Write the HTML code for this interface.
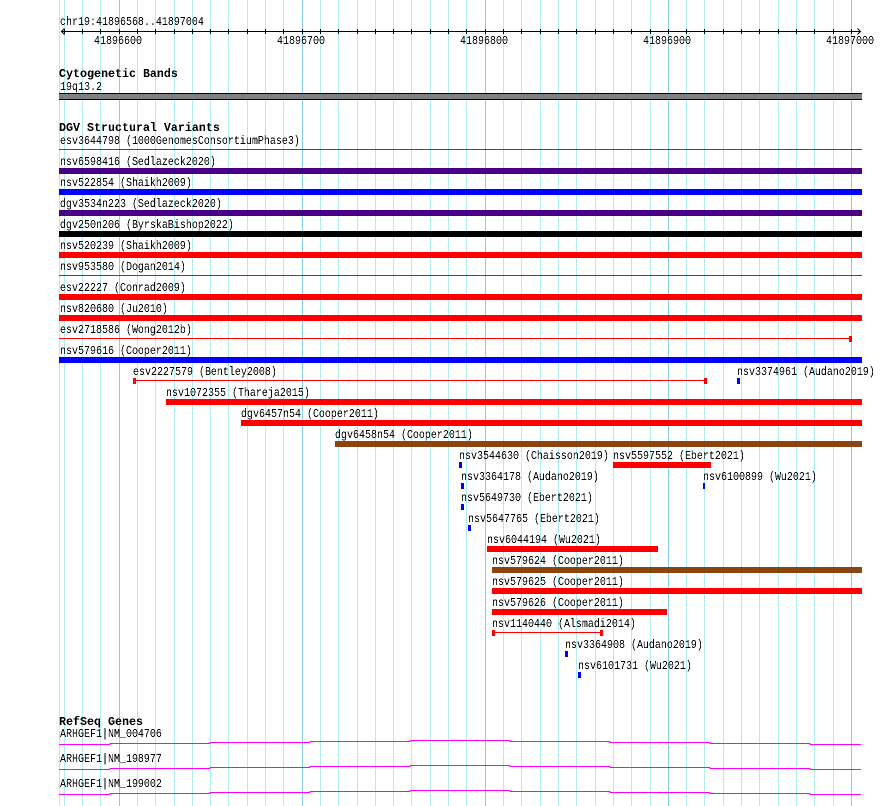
<!DOCTYPE html>
<html><head><meta charset="utf-8"><style>
html,body{margin:0;padding:0;background:#fff;width:890px;height:806px;overflow:hidden}
svg{display:block}
text{font-family:"Liberation Mono",monospace;font-size:10px;fill:#000;white-space:pre}
text.b{font-weight:bold;font-size:11.67px}
</style></head><body>
<svg width="890" height="806" viewBox="0 0 890 806" xmlns="http://www.w3.org/2000/svg" shape-rendering="crispEdges">
<defs><filter id="t" x="0" y="0" width="100%" height="100%" filterUnits="userSpaceOnUse" primitiveUnits="userSpaceOnUse"><feComponentTransfer><feFuncA type="linear" slope="3" intercept="-1"/></feComponentTransfer></filter></defs>
<path fill="none" stroke="#afeeee" stroke-width="1" d="M59.5 0V806M64.5 0V806M82.5 0V806M100.5 0V806M137.5 0V806M155.5 0V806M174.5 0V806M192.5 0V806M210.5 0V806M228.5 0V806M247.5 0V806M265.5 0V806M283.5 0V806M320.5 0V806M338.5 0V806M357.5 0V806M375.5 0V806M393.5 0V806M411.5 0V806M430.5 0V806M448.5 0V806M466.5 0V806M503.5 0V806M521.5 0V806M540.5 0V806M558.5 0V806M576.5 0V806M595.5 0V806M613.5 0V806M631.5 0V806M650.5 0V806M686.5 0V806M704.5 0V806M723.5 0V806M741.5 0V806M759.5 0V806M778.5 0V806M796.5 0V806M814.5 0V806M833.5 0V806"/>
<path fill="none" stroke="#87ceeb" stroke-width="1" d="M119.5 0V806M302.5 0V806M485.5 0V806M668.5 0V806M851.5 0V806"/>
<!-- axis -->
<path fill="none" stroke="#000" stroke-width="1" d="M61 31.5H860M64.5 29V34M82.5 29V34M100.5 29V34M119.5 29V34M137.5 29V34M155.5 29V34M174.5 29V34M192.5 29V34M210.5 29V34M228.5 29V34M247.5 29V34M265.5 29V34M283.5 29V34M302.5 29V34M320.5 29V34M338.5 29V34M357.5 29V34M375.5 29V34M393.5 29V34M411.5 29V34M430.5 29V34M448.5 29V34M466.5 29V34M485.5 29V34M503.5 29V34M521.5 29V34M540.5 29V34M558.5 29V34M576.5 29V34M595.5 29V34M613.5 29V34M631.5 29V34M650.5 29V34M668.5 29V34M686.5 29V34M704.5 29V34M723.5 29V34M741.5 29V34M759.5 29V34M778.5 29V34M796.5 29V34M814.5 29V34M833.5 29V34M851.5 29V34"/>
<path fill="none" stroke="#000" stroke-width="1" shape-rendering="auto" d="M64.5 28.5L61.5 31.5L64.5 34.5M857.5 28.5L860.5 31.5L857.5 34.5"/>
<!-- cytoband -->
<rect x="59" y="93" width="803" height="7" fill="#000"/>
<rect x="59" y="94" width="803" height="5" fill="#808080"/>
<!-- full width bars -->
<rect x="59" y="149" width="803" height="1" fill="#f00"/>
<rect x="59" y="168" width="803" height="6" fill="#4b0082"/>
<rect x="59" y="189" width="803" height="6" fill="#00f"/>
<rect x="59" y="210" width="803" height="6" fill="#4b0082"/>
<rect x="59" y="231" width="803" height="6" fill="#000"/>
<rect x="59" y="252" width="803" height="6" fill="#f00"/>
<rect x="59" y="275" width="803" height="1" fill="#f00"/>
<rect x="59" y="294" width="803" height="6" fill="#f00"/>
<rect x="59" y="315" width="803" height="6" fill="#f00"/>
<rect x="59" y="338" width="793" height="1" fill="#f00"/>
<rect x="849" y="336" width="3" height="6" fill="#f00"/>
<rect x="59" y="357" width="803" height="6" fill="#00f"/>
<!-- staggered -->
<rect x="133" y="378" width="3" height="6" fill="#f00"/>
<rect x="133" y="380" width="574" height="1" fill="#f00"/>
<rect x="704" y="378" width="3" height="6" fill="#f00"/>
<rect x="737" y="378" width="3" height="6" fill="#00f"/>
<rect x="166" y="399" width="696" height="6" fill="#f00"/>
<rect x="241" y="420" width="621" height="6" fill="#f00"/>
<rect x="335" y="441" width="527" height="6" fill="#8b4513"/>
<rect x="459" y="462" width="3" height="6" fill="#00f"/>
<rect x="613" y="462" width="98" height="6" fill="#f00"/>
<rect x="461" y="483" width="3" height="6" fill="#00f"/>
<rect x="703" y="483" width="2" height="6" fill="#00f"/>
<rect x="461" y="504" width="3" height="6" fill="#00f"/>
<rect x="468" y="525" width="3" height="6" fill="#00f"/>
<rect x="487" y="546" width="171" height="6" fill="#f00"/>
<rect x="492" y="567" width="370" height="6" fill="#8b4513"/>
<rect x="492" y="588" width="370" height="6" fill="#f00"/>
<rect x="492" y="609" width="175" height="6" fill="#f00"/>
<rect x="492" y="630" width="3" height="6" fill="#f00"/>
<rect x="492" y="632" width="111" height="1" fill="#f00"/>
<rect x="600" y="630" width="3" height="6" fill="#f00"/>
<rect x="565" y="651" width="3" height="6" fill="#00f"/>
<rect x="578" y="672" width="3" height="6" fill="#00f"/>
<!-- genes -->
<path fill="none" stroke="#f0f" stroke-width="1" d="M59 744.5H110V743.5H210V742.5H310V741.5H410V740.5H510V741.5H610V742.5H710V743.5H810V744.5H861"/>
<path fill="none" stroke="#f0f" stroke-width="1" d="M59 769.5H110V768.5H210V767.5H310V766.5H410V765.5H510V766.5H610V767.5H710V768.5H810V769.5H861"/>
<path fill="none" stroke="#f0f" stroke-width="1" d="M59 794.5H110V793.5H210V792.5H310V791.5H410V790.5H510V791.5H610V792.5H710V793.5H810V794.5H861"/>
<g filter="url(#t)">
<text transform="translate(60 25) scale(1 1.15)">chr19:41896568..41897004</text>
<text transform="translate(94 44) scale(1 1.15)">41896600</text>
<text transform="translate(277 44) scale(1 1.15)">41896700</text>
<text transform="translate(460 44) scale(1 1.15)">41896800</text>
<text transform="translate(643 44) scale(1 1.15)">41896900</text>
<text transform="translate(826 44) scale(1 1.15)">41897000</text>
<text class="b" x="59" y="77">Cytogenetic Bands</text>
<text transform="translate(60 90) scale(1 1.15)">19q13.2</text>
<text class="b" x="59" y="131">DGV Structural Variants</text>
<text transform="translate(60 144) scale(1 1.15)">esv3644798 (1000GenomesConsortiumPhase3)</text>
<text transform="translate(60 165) scale(1 1.15)">nsv6598416 (Sedlazeck2020)</text>
<text transform="translate(60 186) scale(1 1.15)">nsv522854 (Shaikh2009)</text>
<text transform="translate(60 207) scale(1 1.15)">dgv3534n223 (Sedlazeck2020)</text>
<text transform="translate(60 228) scale(1 1.15)">dgv250n206 (ByrskaBishop2022)</text>
<text transform="translate(60 249) scale(1 1.15)">nsv520239 (Shaikh2009)</text>
<text transform="translate(60 270) scale(1 1.15)">nsv953580 (Dogan2014)</text>
<text transform="translate(60 291) scale(1 1.15)">esv22227 (Conrad2009)</text>
<text transform="translate(60 312) scale(1 1.15)">nsv820680 (Ju2010)</text>
<text transform="translate(60 333) scale(1 1.15)">esv2718586 (Wong2012b)</text>
<text transform="translate(60 354) scale(1 1.15)">nsv579616 (Cooper2011)</text>
<text transform="translate(133 375) scale(1 1.15)">esv2227579 (Bentley2008)</text>
<text transform="translate(737 375) scale(1 1.15)">nsv3374961 (Audano2019)</text>
<text transform="translate(166 396) scale(1 1.15)">nsv1072355 (Thareja2015)</text>
<text transform="translate(241 417) scale(1 1.15)">dgv6457n54 (Cooper2011)</text>
<text transform="translate(335 438) scale(1 1.15)">dgv6458n54 (Cooper2011)</text>
<text transform="translate(459 459) scale(1 1.15)">nsv3544630 (Chaisson2019)</text>
<text transform="translate(613 459) scale(1 1.15)">nsv5597552 (Ebert2021)</text>
<text transform="translate(461 480) scale(1 1.15)">nsv3364178 (Audano2019)</text>
<text transform="translate(703 480) scale(1 1.15)">nsv6100899 (Wu2021)</text>
<text transform="translate(461 501) scale(1 1.15)">nsv5649730 (Ebert2021)</text>
<text transform="translate(468 522) scale(1 1.15)">nsv5647765 (Ebert2021)</text>
<text transform="translate(487 543) scale(1 1.15)">nsv6044194 (Wu2021)</text>
<text transform="translate(492 564) scale(1 1.15)">nsv579624 (Cooper2011)</text>
<text transform="translate(492 585) scale(1 1.15)">nsv579625 (Cooper2011)</text>
<text transform="translate(492 606) scale(1 1.15)">nsv579626 (Cooper2011)</text>
<text transform="translate(492 627) scale(1 1.15)">nsv1140440 (Alsmadi2014)</text>
<text transform="translate(565 648) scale(1 1.15)">nsv3364908 (Audano2019)</text>
<text transform="translate(578 669) scale(1 1.15)">nsv6101731 (Wu2021)</text>
<text class="b" x="59" y="725">RefSeq Genes</text>
<text transform="translate(60 737) scale(1 1.15)">ARHGEF1|NM_004706</text>
<text transform="translate(60 762) scale(1 1.15)">ARHGEF1|NM_198977</text>
<text transform="translate(60 787) scale(1 1.15)">ARHGEF1|NM_199002</text>
</g>
</svg>
</body></html>
